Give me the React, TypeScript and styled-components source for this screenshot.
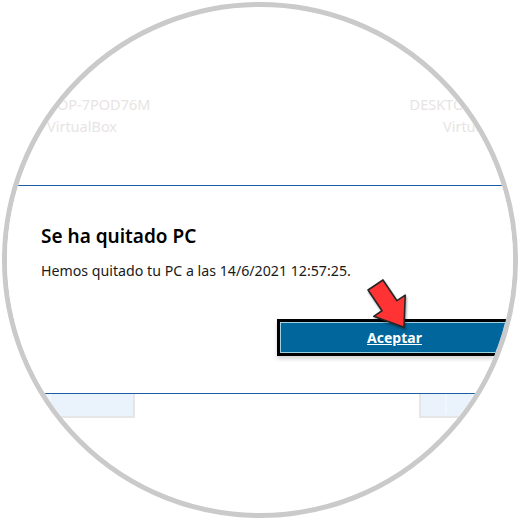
import styled, { createGlobalStyle } from 'styled-components';

const GlobalStyle = createGlobalStyle`
    html, body {
        margin: 0;
        padding: 0;
        background: #ffffff;
    }
    body {
        font-family: "Noto Sans", "Open Sans", sans-serif;
    }
`;

const Stage = styled.div`
    width: 520px;
    height: 520px;
    display: flex;
    align-items: center;
    justify-content: center;
    background: #ffffff;
`;

// the round magnifier that crops the screenshot
const Lens = styled.div`
    position: relative;
    box-sizing: border-box;
    width: 516px;
    height: 516px;
    border: 5px solid #cacaca;
    border-radius: 50%;
    overflow: hidden;
    background: #ffffff;
    display: flex;
    flex-direction: column;
`;

const TopBand = styled.div`
    height: 178px;
    box-sizing: border-box;
    padding-top: 86px;
`;

const DeviceRow = styled.div`
    display: grid;
    grid-template-columns: 150px 150px;
    column-gap: 246px;
`;

const Tile = styled.div`
    text-align: center;
    font-size: 14.5px;
    line-height: 22px;
    color: #e8e4e4;
    white-space: nowrap;
`;

const Dialog = styled.div`
    border-top: 1px solid #1c5fa5;
    border-bottom: 1px solid #1c5fa5;
    padding: 36px 0 37px 34px;
    background: #ffffff;
`;

const Title = styled.h2`
    margin: 0;
    font-size: 19px;
    line-height: 28px;
    font-weight: 600;
    color: #000000;
`;

const Message = styled.p`
    margin: 11px 0 0;
    font-size: 14.2px;
    line-height: 20px;
    color: #1a1a1a;
`;

const ButtonRow = styled.div`
    display: flex;
    margin-top: 38px;
    padding-left: 236px;
`;

const PrimaryButton = styled.button`
    box-sizing: border-box;
    width: 235px;
    height: 37px;
    border: 3px solid #000000;
    background: #00669b;
    box-shadow: inset 0 0 0 1px #9fd2e4, 0 3px 4px rgba(0, 0, 0, 0.16);
    color: #ffffff;
    font-family: "Noto Sans", sans-serif;
    font-size: 14px;
    font-weight: 700;
    text-decoration: underline;
    padding: 0;
`;

const BottomBand = styled.div`
    flex: 1;
`;

const Thumb = styled.div`
    position: relative;
    box-sizing: border-box;
    width: 112px;
    height: 24px;
    margin-left: 16px;
    border: 2px solid #e6e6e6;
    border-top: none;
    background: #eaf3fb;

    &::before {
        content: '';
        position: absolute;
        left: 24px;
        top: 0;
        bottom: 2px;
        width: 2px;
        background: #f1f7fc;
    }
`;

const Pointer = styled.svg`
    position: absolute;
    left: 343px;
    top: 265px;
    width: 70px;
    height: 70px;
    overflow: visible;
    filter: drop-shadow(1px 2px 1px rgba(0, 0, 0, 0.35));
`;

const devices = [
    { name: 'DESKTOP-7POD76M', model: 'VirtualBox' },
    { name: 'DESKTOP-7POD76M', model: 'VirtualBox' },
];

export default function App() {
    return (
        <>
            <GlobalStyle />
            <Stage>
                <Lens>
                    <TopBand>
                        <DeviceRow>
                            {devices.map((d, i) => (
                                <Tile key={i}>
                                    <div>{d.name}</div>
                                    <div>{d.model}</div>
                                </Tile>
                            ))}
                        </DeviceRow>
                    </TopBand>
                    <Dialog>
                        <Title>Se ha quitado PC</Title>
                        <Message>Hemos quitado tu PC a las 14/6/2021 12:57:25.</Message>
                        <ButtonRow>
                            <PrimaryButton>Aceptar</PrimaryButton>
                        </ButtonRow>
                    </Dialog>
                    <BottomBand>
                        <DeviceRow>
                            <Thumb />
                            <Thumb />
                        </DeviceRow>
                    </BottomBand>
                    <Pointer viewBox="0 0 70 70">
                        <g transform="translate(25.5 13) rotate(-34)">
                            <polygon
                                points="-9,0 9,0 9,25 19,25 0,51 -19,25 -9,25"
                                fill="#ff3333"
                                stroke="#262626"
                                strokeWidth="1.6"
                                strokeLinejoin="round"
                            />
                        </g>
                    </Pointer>
                </Lens>
            </Stage>
        </>
    );
}
